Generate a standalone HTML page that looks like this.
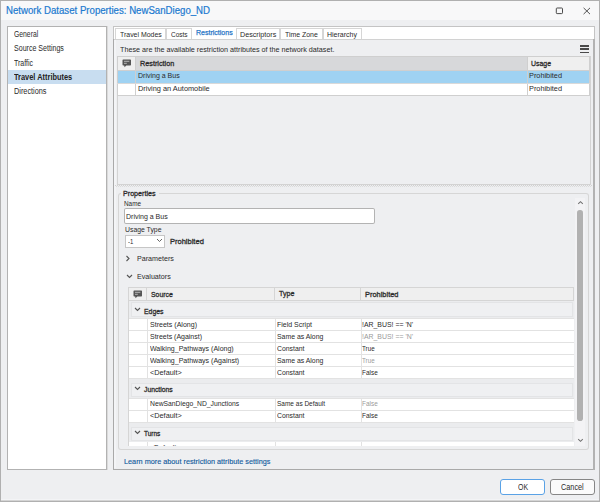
<!DOCTYPE html>
<html><head><meta charset="utf-8"><style>
html,body{margin:0;padding:0;width:600px;height:502px;overflow:hidden;background:#eeeff1;}
body{position:relative;font-family:"Liberation Sans",sans-serif;}
body>div,svg{position:absolute;}
body>div>div{position:absolute;}
.t{white-space:nowrap;transform-origin:0 0;}
</style></head><body>
<div style="left:0px;top:0px;width:600px;height:502px;background:#eeeff1;"></div>
<div style="left:1px;top:1px;width:598px;height:19px;background:#f8f8f9;"></div>
<div class="t" style="left:6.00px;top:6.00px;font-size:10px;line-height:10px;color:#1c7ad0;transform:scaleX(0.9634);-webkit-text-stroke:0.2px #1c7ad0;">Network Dataset Properties: NewSanDiego_ND</div>
<svg style="position:absolute;left:0;top:0" width="600" height="20"><rect x="556.3" y="8" width="6.2" height="5.6" rx="0.8" fill="none" stroke="#4a4a4a" stroke-width="1"/><path d="M583.6 7.9 L590 14.1 M590 7.9 L583.6 14.1" stroke="#4a4a4a" stroke-width="0.95"/></svg>
<div style="left:1px;top:499px;width:598px;height:1px;background:#f3f4f6;"></div>
<div style="left:1px;top:500px;width:598px;height:1px;background:#d4d4d4;"></div>
<div style="left:0px;top:0px;width:600px;height:502px;box-shadow:inset 0 0 0 1px #b0b0b0;"></div>
<div style="left:7px;top:26px;width:100px;height:444px;background:#fff;box-shadow:inset 0 0 0 1px #b2b2b2;"></div>
<div style="left:107px;top:26px;width:1px;height:444px;background:#dadada;"></div>
<div style="left:8px;top:70px;width:98px;height:14px;background:#c8ddf0;"></div>
<div class="t" style="left:14.30px;top:30.00px;font-size:8.5px;line-height:8.5px;color:#2a2a2a;transform:scaleX(0.8003);">General</div>
<div class="t" style="left:14.30px;top:44.00px;font-size:8.5px;line-height:8.5px;color:#2a2a2a;transform:scaleX(0.8316);">Source Settings</div>
<div class="t" style="left:14.30px;top:59.00px;font-size:8.5px;line-height:8.5px;color:#2a2a2a;transform:scaleX(0.8253);">Traffic</div>
<div class="t" style="left:14.30px;top:87.00px;font-size:8.5px;line-height:8.5px;color:#2a2a2a;transform:scaleX(0.8600);">Directions</div>
<div class="t" style="left:14.30px;top:73.00px;font-size:8.5px;line-height:8.5px;color:#222;font-weight:bold;transform:scaleX(0.8718);">Travel Attributes</div>
<div style="left:113px;top:39px;width:482px;height:431px;background:#eeeff1;box-shadow:inset 0 -1px 0 #a9a9a9;"></div>
<div style="left:113px;top:26px;width:482px;height:13px;background:#fff;box-shadow:inset 1px 1px 0 #c4c4c4,inset -1px 0 0 #c4c4c4;"></div>
<div style="left:115px;top:28px;width:51px;height:11px;background:#fff;box-shadow:inset 1px 1px 0 #d6d6d6,inset -1px 0 0 #d6d6d6;"></div>
<div style="left:166px;top:28px;width:26px;height:11px;background:#fff;box-shadow:inset 1px 1px 0 #d6d6d6,inset -1px 0 0 #d6d6d6;"></div>
<div style="left:236px;top:28px;width:44px;height:11px;background:#fff;box-shadow:inset 1px 1px 0 #d6d6d6,inset -1px 0 0 #d6d6d6;"></div>
<div style="left:280px;top:28px;width:43px;height:11px;background:#fff;box-shadow:inset 1px 1px 0 #d6d6d6,inset -1px 0 0 #d6d6d6;"></div>
<div style="left:323px;top:28px;width:39px;height:11px;background:#fff;box-shadow:inset 1px 1px 0 #d6d6d6,inset -1px 0 0 #d6d6d6;"></div>
<div style="left:113px;top:39px;width:482px;height:1px;background:#d2d2d2;"></div>
<div style="left:113px;top:39px;width:1.3px;height:431px;background:#a9a9a9;"></div>
<div style="left:114.3px;top:40px;width:2.2px;height:428px;background:#f3f4f6;"></div>
<div style="left:593px;top:39px;width:2px;height:431px;background:#b2b2b2;"></div>
<div class="t" style="left:119.70px;top:31.00px;font-size:8px;line-height:8px;color:#2a2a2a;transform:scaleX(0.8658);">Travel Modes</div>
<div class="t" style="left:170.70px;top:31.00px;font-size:8px;line-height:8px;color:#2a2a2a;transform:scaleX(0.8118);">Costs</div>
<div class="t" style="left:195.70px;top:29.00px;font-size:8px;line-height:8px;color:#1f74c6;transform:scaleX(0.8782);-webkit-text-stroke:0.25px #1f74c6;">Restrictions</div>
<div class="t" style="left:240.00px;top:31.00px;font-size:8px;line-height:8px;color:#2a2a2a;transform:scaleX(0.8973);">Descriptors</div>
<div class="t" style="left:285.00px;top:31.00px;font-size:8px;line-height:8px;color:#2a2a2a;transform:scaleX(0.8646);">Time Zone</div>
<div class="t" style="left:327.00px;top:31.00px;font-size:8px;line-height:8px;color:#2a2a2a;transform:scaleX(0.8764);">Hierarchy</div>
<div class="t" style="left:120.30px;top:46.00px;font-size:8px;line-height:8px;color:#2a2a2a;transform:scaleX(0.8995);">These are the available restriction attributes of the network dataset.</div>
<div style="left:580px;top:45.1px;width:9px;height:1.7px;background:#4a4a4a;"></div>
<div style="left:580px;top:48.3px;width:9px;height:1.7px;background:#4a4a4a;"></div>
<div style="left:580px;top:51.5px;width:9px;height:1.7px;background:#4a4a4a;"></div>
<div style="left:116.5px;top:56px;width:474.5px;height:128.5px;box-shadow:inset 0 0 0 1px #d3d3d3;"></div>
<div style="left:117px;top:56px;width:473px;height:14.5px;background:#efefef;"></div>
<div style="left:135px;top:56px;width:392px;height:14.5px;background:#d7d8da;"></div>
<div style="left:117px;top:70.5px;width:473px;height:12px;background:#9fd2f2;"></div>
<div style="left:117px;top:82.5px;width:473px;height:13px;background:#fff;"></div>
<div style="left:117px;top:56px;width:473px;height:40px;box-shadow:inset 0 0 0 1px #cfcfcf;"></div>
<div style="left:135px;top:56px;width:1px;height:40px;background:#cfcfcf;"></div>
<div style="left:527px;top:56px;width:1px;height:40px;background:#cfcfcf;"></div>
<div style="left:117px;top:70px;width:473px;height:1px;background:#cfcfcf;"></div>
<div style="left:117px;top:82.5px;width:473px;height:1px;background:#d9d9d9;"></div>
<svg style="position:absolute;left:122px;top:59px" width="10" height="9"><path d="M0.5 1.2 Q0.5 0.5 1.2 0.5 H8.3 Q9 0.5 9 1.2 V5.8 Q9 6.5 8.3 6.5 H4.3 L2.6 8.3 L2.2 6.5 H1.2 Q0.5 6.5 0.5 5.8 Z" fill="#555"/><path d="M2 2.3 H7.3 M2 4.3 H4.8" stroke="#a0a0a0" stroke-width="1.2"/></svg>
<div class="t" style="left:140.00px;top:60.00px;font-size:8px;line-height:8px;color:#2a2a2a;-webkit-text-stroke:0.3px #2a2a2a;transform:scaleX(0.9050);">Restriction</div>
<div class="t" style="left:531.30px;top:60.00px;font-size:8px;line-height:8px;color:#2a2a2a;-webkit-text-stroke:0.3px #2a2a2a;transform:scaleX(0.8649);">Usage</div>
<div class="t" style="left:138.00px;top:72.00px;font-size:8px;line-height:8px;color:#2a2a2a;transform:scaleX(0.8765);">Driving a Bus</div>
<div class="t" style="left:138.00px;top:85.00px;font-size:8px;line-height:8px;color:#2a2a2a;transform:scaleX(0.9213);">Driving an Automobile</div>
<div class="t" style="left:529.00px;top:72.00px;font-size:8px;line-height:8px;color:#2a2a2a;transform:scaleX(0.9161);">Prohibited</div>
<div class="t" style="left:529.00px;top:85.00px;font-size:8px;line-height:8px;color:#2a2a2a;transform:scaleX(0.9161);">Prohibited</div>
<div style="left:115px;top:185px;width:477px;height:1px;background-image:repeating-linear-gradient(90deg,#d2d2d2 0 1px,transparent 1px 2px);"></div>
<div style="left:115px;top:186px;width:477px;height:1px;background-image:repeating-linear-gradient(90deg,transparent 0 1px,#dcdcdc 1px 2px);"></div>
<div style="left:118px;top:193px;width:471px;height:256.5px;box-shadow:inset 0 0 0 1px #d6d6d6;border-radius:3px;"></div>
<div style="left:121px;top:188px;width:38px;height:8px;background:#eeeff1;"></div>
<div class="t" style="left:123.00px;top:190.00px;font-size:8px;line-height:8px;color:#2a2a2a;-webkit-text-stroke:0.3px #2a2a2a;transform:scaleX(0.8914);">Properties</div>
<div class="t" style="left:124.00px;top:200.00px;font-size:8px;line-height:8px;color:#2a2a2a;transform:scaleX(0.7966);">Name</div>
<div style="left:124px;top:208px;width:251px;height:16px;background:#fff;box-shadow:inset 0 0 0 1px #b3b3b3;border-radius:2px;"></div>
<div class="t" style="left:126.00px;top:213.00px;font-size:8px;line-height:8px;color:#2a2a2a;transform:scaleX(0.8765);">Driving a Bus</div>
<div class="t" style="left:124.50px;top:226.00px;font-size:8px;line-height:8px;color:#2a2a2a;transform:scaleX(0.8579);">Usage Type</div>
<div style="left:124.5px;top:234.5px;width:40.5px;height:13px;background:#fff;box-shadow:inset 0 0 0 1px #c6c6c6;"></div>
<div class="t" style="left:127.70px;top:238.00px;font-size:8px;line-height:8px;color:#2a2a2a;transform:scaleX(0.7451);">-1</div>
<svg style="position:absolute;left:156px;top:238px" width="7" height="5"><path d="M1 1 L3.5 3.5 L6 1" stroke="#555" fill="none" stroke-width="0.9"/></svg>
<div class="t" style="left:170.00px;top:238.00px;font-size:8px;line-height:8px;color:#2a2a2a;-webkit-text-stroke:0.3px #2a2a2a;transform:scaleX(0.9383);">Prohibited</div>
<svg style="position:absolute;left:125px;top:255px" width="6" height="7"><path d="M1.5 1 L4 3.5 L1.5 6" stroke="#555" fill="none" stroke-width="1.1"/></svg>
<div class="t" style="left:136.70px;top:255.00px;font-size:8px;line-height:8px;color:#2a2a2a;transform:scaleX(0.8924);">Parameters</div>
<svg style="position:absolute;left:125.5px;top:274px" width="7" height="5"><path d="M1 1 L3.5 3.5 L6 1" stroke="#555" fill="none" stroke-width="1.1"/></svg>
<div class="t" style="left:136.70px;top:273.00px;font-size:8px;line-height:8px;color:#2a2a2a;transform:scaleX(0.8916);">Evaluators</div>
<div style="left:128px;top:286.5px;width:446px;height:14px;background:#efefef;box-shadow:inset 0 0 0 1px #d5d5d5;"></div>
<div style="left:146px;top:286.5px;width:1px;height:14px;background:#d5d5d5;"></div>
<div style="left:274.4px;top:286.5px;width:1px;height:14px;background:#d5d5d5;"></div>
<div style="left:359.6px;top:286.5px;width:1px;height:14px;background:#d5d5d5;"></div>
<svg style="position:absolute;left:133px;top:289.5px" width="10" height="9"><path d="M0.5 1.2 Q0.5 0.5 1.2 0.5 H8.3 Q9 0.5 9 1.2 V5.8 Q9 6.5 8.3 6.5 H4.3 L2.6 8.3 L2.2 6.5 H1.2 Q0.5 6.5 0.5 5.8 Z" fill="#555"/><path d="M2 2.3 H7.3 M2 4.3 H4.8" stroke="#a0a0a0" stroke-width="1.2"/></svg>
<div class="t" style="left:150.90px;top:291.00px;font-size:8px;line-height:8px;color:#2a2a2a;-webkit-text-stroke:0.3px #2a2a2a;transform:scaleX(0.8600);">Source</div>
<div class="t" style="left:279.00px;top:290.00px;font-size:8px;line-height:8px;color:#2a2a2a;-webkit-text-stroke:0.3px #2a2a2a;transform:scaleX(0.8879);">Type</div>
<div class="t" style="left:365.00px;top:291.00px;font-size:8px;line-height:8px;color:#2a2a2a;-webkit-text-stroke:0.3px #2a2a2a;transform:scaleX(0.9299);">Prohibited</div>
<div style="left:128px;top:300.5px;width:446px;height:18.0px;background:#ebecee;"></div>
<div style="left:130.5px;top:301.5px;width:442px;height:15.5px;background:#eff0f2;box-shadow:inset 0 0 0 1px #e3e4e6;"></div>
<svg style="position:absolute;left:133.8px;top:307.0px" width="7" height="5"><path d="M1 1 L3.5 3.5 L6 1" stroke="#555" fill="none" stroke-width="1.1"/></svg>
<div class="t" style="left:144.00px;top:308.00px;font-size:8px;line-height:8px;color:#2a2a2a;-webkit-text-stroke:0.3px #2a2a2a;transform:scaleX(0.8596);">Edges</div>
<div style="left:128px;top:318.5px;width:446px;height:60px;background:#fff;"></div>
<div style="left:128px;top:318.0px;width:446px;height:1px;background:#e2e2e2;"></div>
<div style="left:128px;top:330.0px;width:446px;height:1px;background:#e2e2e2;"></div>
<div style="left:128px;top:342.0px;width:446px;height:1px;background:#e2e2e2;"></div>
<div style="left:128px;top:354.0px;width:446px;height:1px;background:#e2e2e2;"></div>
<div style="left:128px;top:366.0px;width:446px;height:1px;background:#e2e2e2;"></div>
<div style="left:128px;top:378.0px;width:446px;height:1px;background:#e2e2e2;"></div>
<div style="left:147px;top:318.5px;width:1px;height:60px;background:#e2e2e2;"></div>
<div style="left:275px;top:318.5px;width:1px;height:60px;background:#e2e2e2;"></div>
<div style="left:360.5px;top:318.5px;width:1px;height:60px;background:#e2e2e2;"></div>
<div class="t" style="left:149.80px;top:321.00px;font-size:8px;line-height:8px;color:#2a2a2a;transform:scaleX(0.8809);">Streets (Along)</div>
<div class="t" style="left:276.70px;top:321.00px;font-size:8px;line-height:8px;color:#2a2a2a;transform:scaleX(0.8747);">Field Script</div>
<div class="t" style="left:362.30px;top:321.00px;font-size:8px;line-height:8px;color:#2a2a2a;transform:scaleX(0.8633);">!AR_BUS! == 'N'</div>
<div class="t" style="left:149.80px;top:333.00px;font-size:8px;line-height:8px;color:#2a2a2a;transform:scaleX(0.8728);">Streets (Against)</div>
<div class="t" style="left:276.70px;top:333.00px;font-size:8px;line-height:8px;color:#2a2a2a;transform:scaleX(0.8604);">Same as Along</div>
<div class="t" style="left:362.30px;top:333.00px;font-size:8px;line-height:8px;color:#9a9a9a;transform:scaleX(0.8633);">!AR_BUS! == 'N'</div>
<div class="t" style="left:149.80px;top:345.00px;font-size:8px;line-height:8px;color:#2a2a2a;transform:scaleX(0.8783);">Walking_Pathways (Along)</div>
<div class="t" style="left:276.70px;top:345.00px;font-size:8px;line-height:8px;color:#2a2a2a;transform:scaleX(0.8588);">Constant</div>
<div class="t" style="left:362.30px;top:345.00px;font-size:8px;line-height:8px;color:#2a2a2a;transform:scaleX(0.7801);">True</div>
<div class="t" style="left:149.80px;top:357.00px;font-size:8px;line-height:8px;color:#2a2a2a;transform:scaleX(0.8786);">Walking_Pathways (Against)</div>
<div class="t" style="left:276.70px;top:357.00px;font-size:8px;line-height:8px;color:#2a2a2a;transform:scaleX(0.8604);">Same as Along</div>
<div class="t" style="left:362.30px;top:357.00px;font-size:8px;line-height:8px;color:#9a9a9a;transform:scaleX(0.7801);">True</div>
<div class="t" style="left:149.80px;top:369.00px;font-size:8px;line-height:8px;color:#2a2a2a;transform:scaleX(0.9138);">&lt;Default&gt;</div>
<div class="t" style="left:276.70px;top:369.00px;font-size:8px;line-height:8px;color:#2a2a2a;transform:scaleX(0.8588);">Constant</div>
<div class="t" style="left:362.30px;top:369.00px;font-size:8px;line-height:8px;color:#2a2a2a;transform:scaleX(0.8026);">False</div>
<div style="left:128px;top:379px;width:446px;height:19px;background:#ebecee;"></div>
<div style="left:130.5px;top:382.5px;width:442px;height:14.0px;background:#eff0f2;box-shadow:inset 0 0 0 1px #e3e4e6;"></div>
<svg style="position:absolute;left:133.8px;top:386.2px" width="7" height="5"><path d="M1 1 L3.5 3.5 L6 1" stroke="#555" fill="none" stroke-width="1.1"/></svg>
<div class="t" style="left:144.00px;top:386.00px;font-size:8px;line-height:8px;color:#2a2a2a;-webkit-text-stroke:0.3px #2a2a2a;transform:scaleX(0.8492);">Junctions</div>
<div style="left:128px;top:398px;width:446px;height:24px;background:#fff;"></div>
<div style="left:128px;top:397.5px;width:446px;height:1px;background:#e2e2e2;"></div>
<div style="left:128px;top:409.5px;width:446px;height:1px;background:#e2e2e2;"></div>
<div style="left:128px;top:421.5px;width:446px;height:1px;background:#e2e2e2;"></div>
<div style="left:147px;top:398px;width:1px;height:24px;background:#e2e2e2;"></div>
<div style="left:275px;top:398px;width:1px;height:24px;background:#e2e2e2;"></div>
<div style="left:360.5px;top:398px;width:1px;height:24px;background:#e2e2e2;"></div>
<div class="t" style="left:149.80px;top:400.00px;font-size:8px;line-height:8px;color:#2a2a2a;transform:scaleX(0.8454);">NewSanDiego_ND_Junctions</div>
<div class="t" style="left:276.70px;top:400.00px;font-size:8px;line-height:8px;color:#2a2a2a;transform:scaleX(0.8116);">Same as Default</div>
<div class="t" style="left:362.30px;top:400.00px;font-size:8px;line-height:8px;color:#9a9a9a;transform:scaleX(0.8026);">False</div>
<div class="t" style="left:149.80px;top:412.00px;font-size:8px;line-height:8px;color:#2a2a2a;transform:scaleX(0.9138);">&lt;Default&gt;</div>
<div class="t" style="left:276.70px;top:412.00px;font-size:8px;line-height:8px;color:#2a2a2a;transform:scaleX(0.8588);">Constant</div>
<div class="t" style="left:362.30px;top:412.00px;font-size:8px;line-height:8px;color:#2a2a2a;transform:scaleX(0.8026);">False</div>
<div style="left:128px;top:422.5px;width:446px;height:19.30000000000001px;background:#ebecee;"></div>
<div style="left:130.5px;top:426.8px;width:442px;height:13.800000000000011px;background:#eff0f2;box-shadow:inset 0 0 0 1px #e3e4e6;"></div>
<svg style="position:absolute;left:133.8px;top:430.0px" width="7" height="5"><path d="M1 1 L3.5 3.5 L6 1" stroke="#555" fill="none" stroke-width="1.1"/></svg>
<div class="t" style="left:144.00px;top:430.00px;font-size:8px;line-height:8px;color:#2a2a2a;-webkit-text-stroke:0.3px #2a2a2a;transform:scaleX(0.8088);">Turns</div>
<div style="left:128px;top:441.8px;width:446px;height:4.2px;background:#fff;"></div>
<div style="left:147px;top:441.8px;width:1px;height:4.2px;background:#e2e2e2;"></div>
<div style="left:275px;top:441.8px;width:1px;height:4.2px;background:#e2e2e2;"></div>
<div style="left:360.5px;top:441.8px;width:1px;height:4.2px;background:#e2e2e2;"></div>
<div style="position:absolute;left:0;top:441.8px;width:600px;height:4.2px;overflow:hidden"><div class="t" style="left:149.8px;top:2.2px;font-size:8px;line-height:8px;color:#2a2a2a;transform:scaleX(0.876)">&lt;Default&gt;</div></div>
<div style="left:128px;top:286.5px;width:1px;height:159.5px;background:#d5d5d5;"></div>
<div style="left:574.8px;top:197.8px;width:10.6px;height:248px;background:#f3f3f5;"></div>
<svg style="position:absolute;left:577px;top:200px" width="7" height="5"><path d="M1.2 3.8 L3.5 1.7 L5.8 3.8" stroke="#707070" fill="none" stroke-width="1.05"/></svg>
<svg style="position:absolute;left:577px;top:437.5px" width="7" height="5"><path d="M1.2 1.2 L3.5 3.3 L5.8 1.2" stroke="#707070" fill="none" stroke-width="1.05"/></svg>
<div style="left:577.4px;top:209.6px;width:5.6px;height:211.8px;background:#b1b1b1;border-radius:2.8px;"></div>
<div class="t" style="left:123.50px;top:458.00px;font-size:8px;line-height:8px;color:#155d9e;transform:scaleX(0.9095);-webkit-text-stroke:0.15px #155d9e;">Learn more about restriction attribute settings</div>
<div style="left:500px;top:479px;width:45px;height:16px;background:#fff;border:1.5px solid #5aa2e6;border-radius:3px;box-sizing:border-box;"></div>
<div class="t" style="left:517.50px;top:483.00px;font-size:8.5px;line-height:8.5px;color:#2a2a2a;transform:scaleX(0.8143);">OK</div>
<div style="left:550px;top:479px;width:45px;height:16px;background:#fbfbfb;border:1.5px solid #868686;border-radius:3px;box-sizing:border-box;"></div>
<div class="t" style="left:561.20px;top:483.00px;font-size:8.5px;line-height:8.5px;color:#2a2a2a;transform:scaleX(0.8579);">Cancel</div>
</body></html>
